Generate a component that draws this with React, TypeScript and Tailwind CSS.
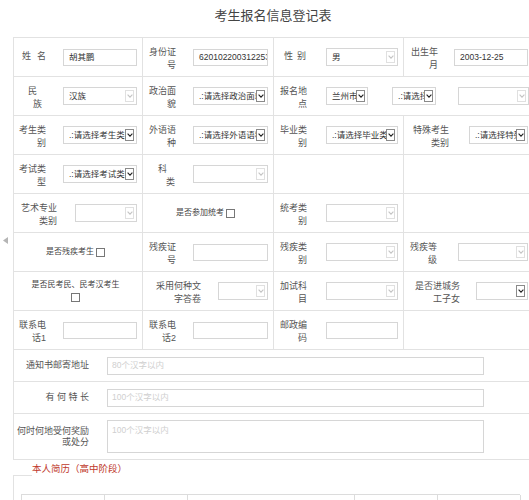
import React from "react";

const font = { fontFamily: '"Liberation Sans", "Noto Sans CJK SC", sans-serif' };

function Lb({ lines, pad = "pl-[6px]" }: { lines: string[]; pad?: string }) {
  return (
    <div className={`flex flex-col items-end text-[9px] leading-[13px] text-[#555] mt-[3px] ${pad}`}>
      {lines.map((l, i) => (
        <span key={i} className="whitespace-nowrap">{l}</span>
      ))}
    </div>
  );
}

function Inp({ value = "", w = "w-[74px]" }: { value?: string; w?: string }) {
  return (
    <div className={`h-[17px] border border-[#d6d6d6] bg-white flex items-center overflow-hidden ${w}`}>
      <span className="pl-[5px] text-[8.5px] text-[#333] whitespace-nowrap">{value}</span>
    </div>
  );
}

function Sel({ text = "", on = false, w = "w-[74px]" }: { text?: string; on?: boolean; w?: string }) {
  return (
    <div className={`h-[18px] border border-[#d6d6d6] bg-white flex items-center ${w}`}>
      <span className="flex-1 overflow-hidden whitespace-nowrap pl-[5px] text-[8.5px] text-[#333]">{text}</span>
      <span
        className={`mr-[2px] flex h-[12px] w-[9px] shrink-0 items-center justify-center border bg-white ${
          on ? "border-[#8a8a8a]" : "border-[#e0e0e0]"
        }`}
      >
        <svg width="6" height="4" viewBox="0 0 6 4">
          <path d="M0.6 0.6 L3 3.2 L5.4 0.6" fill="none" stroke={on ? "#222" : "#c4c4c4"} strokeWidth="1.1" />
        </svg>
      </span>
    </div>
  );
}

function Box() {
  return <span className="inline-block h-[9px] w-[9px] border border-[#777] bg-white" />;
}

const cell = "flex items-center justify-between border-r border-b border-[#e2e2e2] h-[39px] pr-[5px]";
const empty = "border-r border-b border-[#e2e2e2] h-[39px]";

export default function App() {
  return (
    <div className="relative w-[529px] h-[500px] overflow-hidden bg-white" style={font}>
      {/* side arrow */}
      <div className="absolute left-[3px] top-[237px]">
        <svg width="5" height="7" viewBox="0 0 5 7">
          <path d="M5 0 L0 3.5 L5 7 Z" fill="#b5b5b5" />
        </svg>
      </div>

      <div className="ml-[13px] w-[520px]">
        <div className="h-[37px] pt-[7px] text-center text-[13px] leading-[18px] text-[#444]">考生报名信息登记表</div>

        <div className="grid grid-cols-[129px_131px_130px_130px] border-l border-t border-[#e2e2e2]">
          {/* row 1 */}
          <div className={cell}>
            <div className="flex gap-[6px] pl-[8px] text-[9px] text-[#555]">
              <span>姓</span>
              <span>名</span>
            </div>
            <Inp value="胡其鹏" />
          </div>
          <div className={cell}>
            <Lb lines={["身份证", "号"]} />
            <Inp value="6201022003122533" w="w-[75px]" />
          </div>
          <div className={cell}>
            <div className="flex gap-[4px] pl-[10px] text-[9px] text-[#555]">
              <span>性</span>
              <span>别</span>
            </div>
            <Sel text="男" w="w-[72px]" />
          </div>
          <div className={cell}>
            <Lb lines={["出生年", "月"]} pad="pl-[7px]" />
            <Inp value="2003-12-25" />
          </div>

          {/* row 2 */}
          <div className={cell}>
            <div className="mt-[3px] flex flex-col pl-[14px] text-[9px] leading-[13px] text-[#555]">
              <span>民</span>
              <span className="pl-[5px]">族</span>
            </div>
            <Sel text="汉族" />
          </div>
          <div className={cell}>
            <Lb lines={["政治面", "貌"]} />
            <Sel text=".:请选择政治面貌" on w="w-[75px]" />
          </div>
          <div className={`${cell} col-span-2 justify-start`}>
            <Lb lines={["报名地", "点"]} />
            <div className="ml-[19px]">
              <Sel text="兰州市" on w="w-[42px]" />
            </div>
            <div className="ml-[24px]">
              <Sel text=".:请选择" on w="w-[44px]" />
            </div>
            <div className="ml-[22px]">
              <Sel w="w-[71px]" />
            </div>
          </div>

          {/* row 3 */}
          <div className={cell}>
            <Lb lines={["考生类", "别"]} pad="pl-[5px]" />
            <Sel text=".:请选择考生类别" on />
          </div>
          <div className={cell}>
            <Lb lines={["外语语", "种"]} />
            <Sel text=".:请选择外语语种" on w="w-[75px]" />
          </div>
          <div className={cell}>
            <Lb lines={["毕业类", "别"]} />
            <Sel text=".:请选择毕业类别" on w="w-[72px]" />
          </div>
          <div className={cell}>
            <Lb lines={["特殊考生", "类别"]} pad="pl-[9px]" />
            <Sel text=".:请选择特殊考生" on w="w-[59px]" />
          </div>

          {/* row 4 */}
          <div className={cell}>
            <Lb lines={["考试类", "型"]} pad="pl-[5px]" />
            <Sel text=".:请选择考试类型" on />
          </div>
          <div className={cell}>
            <div className="mt-[3px] flex flex-col pl-[15px] text-[9px] leading-[13px] text-[#555]">
              <span>科</span>
              <span className="pl-[8px]">类</span>
            </div>
            <Sel w="w-[75px]" />
          </div>
          <div className={empty} />
          <div className={empty} />

          {/* row 5 */}
          <div className={cell}>
            <Lb lines={["艺术专业", "类别"]} pad="pl-[7px]" />
            <Sel w="w-[62px]" />
          </div>
          <div className={`${cell} justify-center pr-0`}>
            <span className="text-[8px] text-[#444]">是否参加统考</span>
            <span className="ml-[2px] flex">
              <Box />
            </span>
          </div>
          <div className={cell}>
            <Lb lines={["统考类", "别"]} />
            <Sel w="w-[72px]" />
          </div>
          <div className={empty} />

          {/* row 6 */}
          <div className={`${cell} justify-center pr-0`}>
            <span className="text-[8px] text-[#444]">是否残疾考生</span>
            <span className="ml-[2px] flex">
              <Box />
            </span>
          </div>
          <div className={cell}>
            <Lb lines={["残疾证", "号"]} />
            <Inp w="w-[75px]" />
          </div>
          <div className={cell}>
            <Lb lines={["残疾类", "别"]} />
            <Sel w="w-[72px]" />
          </div>
          <div className={cell}>
            <Lb lines={["残疾等", "级"]} />
            <Sel w="w-[70px]" />
          </div>

          {/* row 7 */}
          <div className={`${cell} flex-col justify-center gap-[3px] pr-0`}>
            <span className="text-[8px] leading-[10px] text-[#444]">是否民考民、民考汉考生</span>
            <span className="flex">
              <Box />
            </span>
          </div>
          <div className={cell}>
            <Lb lines={["采用何种文", "字答卷"]} pad="pl-[13px]" />
            <Sel w="w-[50px]" />
          </div>
          <div className={cell}>
            <Lb lines={["加试科", "目"]} />
            <Sel w="w-[72px]" />
          </div>
          <div className={cell}>
            <Lb lines={["是否进城务", "工子女"]} pad="pl-[11px]" />
            <Sel on w="w-[52px]" />
          </div>

          {/* row 8 */}
          <div className={cell}>
            <Lb lines={["联系电", "话1"]} pad="pl-[5px]" />
            <Inp />
          </div>
          <div className={cell}>
            <Lb lines={["联系电", "话2"]} />
            <Inp w="w-[75px]" />
          </div>
          <div className={cell}>
            <Lb lines={["邮政编", "码"]} />
            <Inp w="w-[72px]" />
          </div>
          <div className={empty} />

          {/* full width rows */}
          <div className="col-span-4 flex h-[32px] items-center border-r border-b border-[#e2e2e2]">
            <div className="w-[75px] text-right text-[9px] text-[#555]">通知书邮寄地址</div>
            <div className="ml-[18px] flex h-[18px] w-[377px] items-center border border-[#d6d6d6] pl-[4px] text-[8.5px] text-[#cfcfcf]">
              80个汉字以内
            </div>
          </div>
          <div className="col-span-4 flex h-[32px] items-center border-r border-b border-[#e2e2e2]">
            <div className="flex w-[75px] justify-end gap-[2.5px] text-[9px] text-[#555]">
              <span>有</span>
              <span>何</span>
              <span>特</span>
              <span>长</span>
            </div>
            <div className="ml-[18px] flex h-[18px] w-[377px] items-center border border-[#d6d6d6] pl-[4px] text-[8.5px] text-[#cfcfcf]">
              100个汉字以内
            </div>
          </div>
          <div className="col-span-4 flex h-[46px] items-center border-r border-b border-[#e2e2e2]">
            <div className="flex w-[75px] flex-col items-end text-[9px] leading-[11px] text-[#555]">
              <span className="whitespace-nowrap">何时何地受何奖励</span>
              <span>或处分</span>
            </div>
            <div className="ml-[18px] h-[33px] w-[377px] border border-[#d6d6d6] pl-[4px] pt-[3px] text-[8.5px] leading-[12px] text-[#cfcfcf]">
              100个汉字以内
            </div>
          </div>
        </div>

        {/* resume section */}
        <div className="mt-[4px] flex h-[12px] items-end">
          <div className="h-[1px] w-[19px] bg-[#e2e2e2]" />
          <span className="mb-[2px] text-[9.5px] leading-[11px] text-[#c0392b]">本人简历（高中阶段）</span>
        </div>
        <div className="h-[30px] border-l border-[#e2e2e2] pl-[7px] pt-[18px]">
          <div className="grid h-[20px] w-[499px] grid-cols-[83px_83px_167px_83px_83px] border-l border-t border-[#dcdcdc]">
            <div className="border-r border-[#dcdcdc]" />
            <div className="border-r border-[#dcdcdc]" />
            <div className="border-r border-[#dcdcdc]" />
            <div className="border-r border-[#dcdcdc]" />
            <div className="border-r border-[#dcdcdc]" />
          </div>
        </div>
      </div>
    </div>
  );
}
